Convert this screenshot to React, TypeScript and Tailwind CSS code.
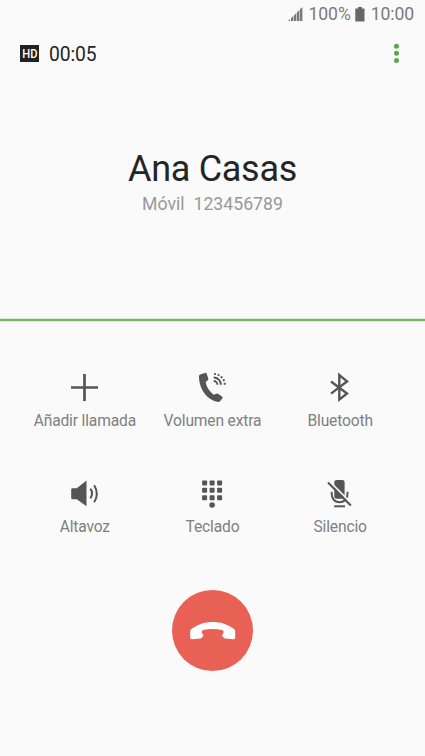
import type { ReactNode } from 'react';

const actions: { label: string; icon: ReactNode }[] = [
  {
    label: 'Añadir llamada',
    icon: <path d="M6 20.5H33M19.5 7V34" fill="none" stroke="currentColor" strokeWidth="2.7" />,
  },
  {
    label: 'Volumen extra',
    icon: (
      <>
        <path d="M8 7.6 13 5.9Q14.2 5.6 14.7 6.7L16.3 11.6Q16.6 12.6 15.8 13.2L13.7 15C14.3 19.5 17.5 24.6 21.8 27.8L24.3 26.7Q25.2 26.3 26 26.8L30.2 29.7Q31 30.3 30.5 31.2L28 34.2Q27.3 35 26 34.9C16 33.5 7.5 23.5 6.9 10Q6.8 8.2 8 7.6Z" />
        <g fill="none" stroke="currentColor">
          <path d="M21.7 14A3.7 3.7 0 0 1 25.4 17.7M21.7 10.5A7.2 7.2 0 0 1 28.9 17.7" strokeWidth="1.9" />
          <path d="M22 6.9A11 11 0 0 1 32.8 17.9" strokeWidth="1.9" strokeDasharray="2 1.7" />
        </g>
      </>
    ),
  },
  {
    label: 'Bluetooth',
    icon: <path d="M11 14.5 27 26.5 19.3 32.6V8L27 14.4 11 26.6" fill="none" stroke="currentColor" strokeWidth="2.4" />,
  },
  {
    label: 'Altavoz',
    icon: (
      <>
        <path d="M7.5 15.3H11.8L21.5 7.6V33.2L11.8 26.2H7.5Q6.2 26.2 6.2 25V16.5Q6.2 15.3 7.5 15.3Z" />
        <path d="M25.3 15.7Q29 20.5 25.3 25.3M29.2 12.2Q34.4 20.8 29.2 29.3" fill="none" stroke="currentColor" strokeWidth="2" />
      </>
    ),
  },
  {
    label: 'Teclado',
    icon: (
      <>
        {[9.9, 17.3, 24.7].map((y) =>
          [12.6, 20.1, 27.6].map((x) => (
            <rect key={`${x}-${y}`} x={x - 2.5} y={y - 2.5} width="5" height="5" rx="0.8" />
          )),
        )}
        <circle cx="20.1" cy="32" r="2.8" />
      </>
    ),
  },
  {
    label: 'Silencio',
    icon: (
      <>
        <rect x="14.3" y="7" width="10.3" height="18.8" rx="2.3" />
        <path d="M11.6 18.8C11.6 25.5 14 29.2 19.5 29.2S27.6 25.5 27.6 18.8" fill="none" stroke="currentColor" strokeWidth="1.9" />
        <path d="M14.2 33.3H25" stroke="currentColor" strokeWidth="2" />
        <path d="M9.3 8.2 32.1 31.2" stroke="#fafafa" strokeWidth="1.8" />
        <path d="M8 9.6 30.8 32.6" stroke="currentColor" strokeWidth="2.1" />
      </>
    ),
  },
];

function StatusBar() {
  return (
    <div className="flex h-[28px] items-center justify-end pr-[11px] text-[17.6px] leading-[28px] text-[#7a7a7a]">
      <svg className="mr-[6px] h-[15px] w-[15px]" viewBox="0 0 15 15" fill="currentColor">
        <path d="M0 14 2 12V14ZM3 11.2 5.4 8.8V14H3ZM6 8.5 8.4 6.1V14H6ZM9 5.3 11.4 2.9V14H9ZM12 2.3 14.4 0V14H12Z" />
      </svg>
      <span className="tracking-[-0.1px]">100%</span>
      <svg className="ml-[4px] mr-[6px] h-[15px] w-[10px]" viewBox="0 0 10 15" fill="#686868">
        <path d="M3 0H7V1.5H9.5V14.5H.3V1.5H3Z" />
      </svg>
      <span className="tracking-[-0.1px]">10:00</span>
    </div>
  );
}

function CallHeader() {
  return (
    <div className="flex h-[52px] items-center px-[20px]">
      <span className="mb-px flex h-[17px] w-[19px] items-center justify-center bg-[#222]">
        <span className="scale-x-[0.86] text-[13px] font-medium leading-none text-white">HD</span>
      </span>
      <span className="ml-[10px] mt-[2px] text-[19.3px] leading-[24px] tracking-[-0.1px] text-[#252525]">00:05</span>
      <svg className="ml-auto h-[24px] w-[17px]" viewBox="0 0 17 24" fill="#5da54f">
        <circle cx="8.5" cy="4.2" r="2.5" />
        <circle cx="8.5" cy="11.3" r="2.5" />
        <circle cx="8.5" cy="18.4" r="2.5" />
      </svg>
    </div>
  );
}

export default function App() {
  return (
    <div className="flex h-[756px] w-[425px] flex-col overflow-hidden bg-[#fafafa] font-['Roboto',sans-serif]">
      <StatusBar />
      <CallHeader />

      <div className="flex h-[238px] flex-col items-center pt-[68px]">
        <h1 className="text-[36px] leading-[42px] tracking-[-0.3px] text-[#252525]">Ana Casas</h1>
        <p className="mt-[2px] whitespace-pre text-[17.7px] leading-[24px] text-[#999]">Móvil  123456789</p>
      </div>
      <div className="h-[4px] border-y border-[#d5f0ca] bg-[#7bb468]" />

      <div className="ml-[21px] grid w-[383px] grid-cols-3 pt-[45px]">
        {actions.map(({ label, icon }) => (
          <button key={label} className="flex h-[106px] flex-col items-center">
            <svg className="h-[40px] w-[40px] text-[#555]" viewBox="0 0 40 40" fill="currentColor">
              {icon}
            </svg>
            <span className="mt-[4px] whitespace-nowrap text-[15.6px] leading-[20px] tracking-[-0.16px] text-[#808080]">
              {label}
            </span>
          </button>
        ))}
      </div>

      <button className="mx-auto mt-[11px] h-[81px] w-[81px] rounded-full bg-[#e96055]">
        <svg className="h-[81px] w-[81px]" viewBox="0 0 81 81" fill="#fff">
          <path d="M18.2 47.6V41.5Q18.2 39.7 20 38.5C27 34 33 32 40.7 32S54.5 34 61.4 38.5Q63.2 39.7 63.2 41.5V47.6Q63.2 49.3 61.5 49.2L53 48.6Q51.4 48.2 51 46.8L49.8 45.2Q51.9 43.6 51.6 41.5Q51.3 40.3 50 40Q40.7 38 31.4 40Q30.1 40.3 29.8 41.5Q29.5 43.6 31.6 45.2L30.4 46.8Q30 48.2 28.4 48.6L19.9 49.2Q18.2 49.3 18.2 47.6Z" />
        </svg>
      </button>
    </div>
  );
}
